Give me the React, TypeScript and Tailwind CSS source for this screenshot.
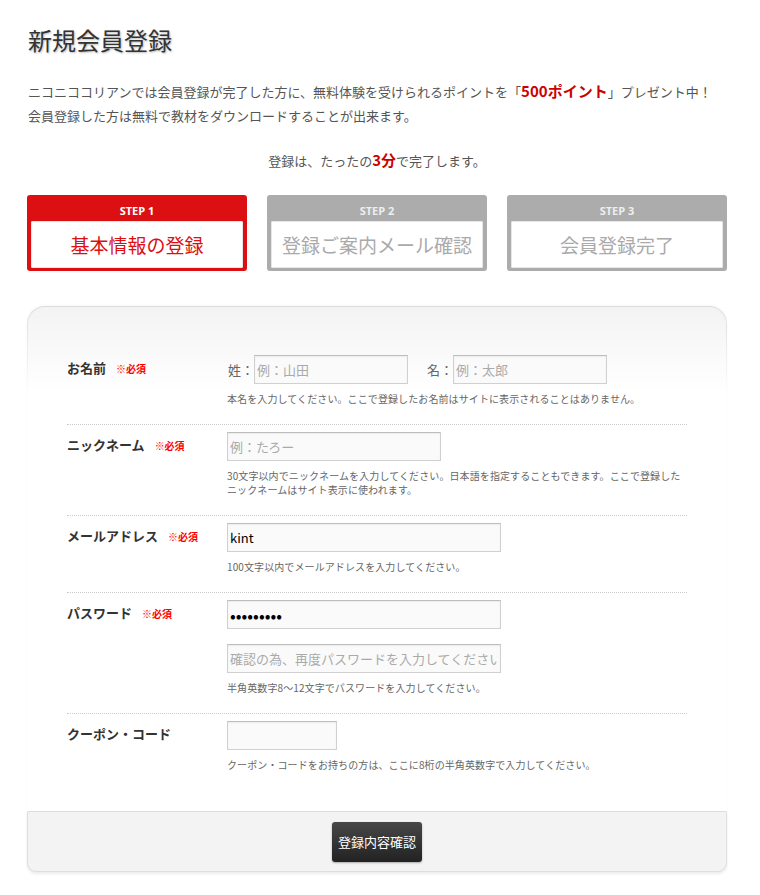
import React from 'react';

const jp = "font-['Noto_Sans_CJK_JP','Noto_Sans',sans-serif]";

const steps = [
  { no: 'STEP 1', label: '基本情報の登録', active: true },
  { no: 'STEP 2', label: '登録ご案内メール確認', active: false },
  { no: 'STEP 3', label: '会員登録完了', active: false },
];

const inputCls =
  'h-[29px] border border-[#d0d0d0] border-t-[#bdbdbd] bg-[#fafafa] px-[2px] text-black outline-none shadow-[inset_0_1px_2px_rgba(0,0,0,0.06)] placeholder:text-[#aaa] ' +
  jp;

function Required() {
  return <span className="ml-[10px] text-[10px] font-bold text-[#f00]">※必須</span>;
}

function Row({
  label,
  required,
  children,
  help,
  last,
}: {
  label: string;
  required?: boolean;
  children: React.ReactNode;
  help: React.ReactNode;
  last?: boolean;
}) {
  return (
    <div className={'flex pt-[7px] ' + (last ? '' : 'pb-[18px] border-b border-dotted border-[#ccc]')}>
      <div className="w-[160px] shrink-0 pt-[4px] text-[13px] leading-[18px] font-bold text-[#333]">
        {label}
        {required && <Required />}
      </div>
      <div className="flex flex-col">
        {children}
        <p className="mt-[8px] text-[10px] leading-[14px] text-[#666] tracking-[0.1px]">{help}</p>
      </div>
    </div>
  );
}

export default function App() {
  return (
    <div className={'w-[760px] bg-white pl-[27px] pr-[33px] pb-[20px] text-[#444] ' + jp}>
      <h1 className="pl-px pt-[24px] text-[24px] leading-[32px] text-[#333] [text-shadow:1px_1px_2px_#bbb]">
        新規会員登録
      </h1>

      <div className="mt-[23px] pl-px text-[13px] leading-[24px] text-[#555]">
        <p>
          ニコニココリアンでは会員登録が完了した方に、無料体験を受けられるポイントを「
          <span className="text-[15px] font-bold text-[#c00]">500ポイント</span>
          」プレゼント中！
        </p>
        <p>会員登録した方は無料で教材をダウンロードすることが出来ます。</p>
      </div>

      <p className="mt-[20px] text-center text-[13px] leading-[24px] text-[#555]">
        登録は、たったの<span className="text-[15px] font-bold text-[#c00]">3分</span>で完了します。
      </p>

      <div className="mt-[22px] flex justify-between">
        {steps.map((s) => (
          <div
            key={s.no}
            className={
              'w-[220px] h-[76px] rounded-[3px] px-[4px] pb-[3px] flex flex-col ' +
              (s.active ? 'bg-[#dc0f12]' : 'bg-[#acacac]')
            }
          >
            <div
              className={
                "h-[26px] pt-[9px] text-center text-[11px] leading-[14px] font-bold font-['Open_Sans',sans-serif] " +
                (s.active ? 'text-white' : 'text-[#eee]')
              }
            >
              {s.no}
            </div>
            <div
              className={
                'flex-1 flex items-center justify-center pt-[2px] bg-white rounded-[1px] border border-[#e6e6e6] text-[19px] ' +
                (s.active ? 'text-[#dc0f12]' : 'text-[#aaa]')
              }
            >
              {s.label}
            </div>
          </div>
        ))}
      </div>

      <div className="mt-[35px] rounded-t-[18px] bg-[linear-gradient(#dcdcdc,#fff_90px)] px-px pt-px shadow-[0_-1px_3px_rgba(0,0,0,0.03)]">
        <div className="rounded-t-[17px] bg-[linear-gradient(#f3f3f3,#fff_85px)] px-[39px] pt-[41px] pb-[39px]">
          <Row
            label="お名前"
            required
            help="本名を入力してください。ここで登録したお名前はサイトに表示されることはありません。"
          >
            <div className="flex items-center text-[13px] text-[#666]">
              <span className="pl-px">姓：</span>
              <input className={inputCls + ' w-[154px] text-[13px]'} placeholder="例：山田" />
              <span className="ml-[19px]">名：</span>
              <input className={inputCls + ' w-[154px] text-[13px]'} placeholder="例：太郎" />
            </div>
          </Row>
          <Row
            label="ニックネーム"
            required
            help={
              <>
                30文字以内でニックネームを入力してください。日本語を指定することもできます。ここで登録した
                <br />
                ニックネームはサイト表示に使われます。
              </>
            }
          >
            <input className={inputCls + ' w-[214px] text-[13px]'} placeholder="例：たろー" />
          </Row>
          <Row label="メールアドレス" required help="100文字以内でメールアドレスを入力してください。">
            <input className={inputCls + ' w-[274px] text-[13px]'} defaultValue="kint" />
          </Row>
          <Row label="パスワード" required help="半角英数字8〜12文字でパスワードを入力してください。">
            <input type="password" className={inputCls + ' w-[274px] text-[17px]'} defaultValue="password1" />
            <input
              type="password"
              className={inputCls + ' w-[274px] mt-[15px] text-[13px]'}
              placeholder="確認の為、再度パスワードを入力してください"
            />
          </Row>
          <Row
            label="クーポン・コード"
            last
            help="クーポン・コードをお持ちの方は、ここに8桁の半角英数字で入力してください。"
          >
            <input className={inputCls + ' w-[110px] text-[13px]'} />
          </Row>
        </div>
      </div>

      <div className="flex h-[61px] items-center justify-center rounded-b-[9px] border border-[#dedede] bg-[#f3f3f3] shadow-[0_2px_3px_rgba(0,0,0,0.08)]">
        <button className="h-[40px] w-[90px] rounded-[3px] bg-[linear-gradient(#474747,#222)] text-[13px] text-white shadow-[0_1px_2px_rgba(0,0,0,0.3)]">
          登録内容確認
        </button>
      </div>
    </div>
  );
}
